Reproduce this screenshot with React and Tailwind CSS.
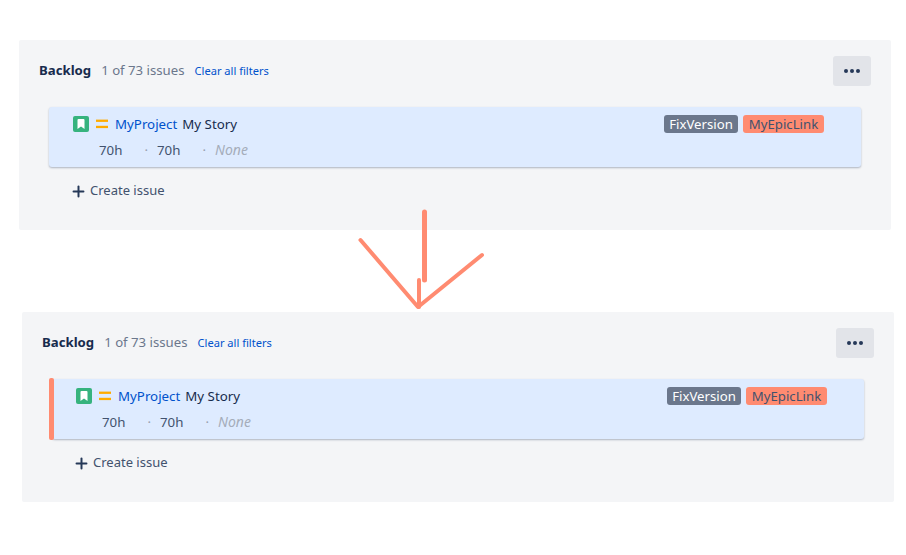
import React from "react";
import { Plus } from "lucide-react";

function Backlog({ className, marked }) {
  return (
    <div className={`w-[872px] h-[190px] bg-[#f4f5f7] rounded-[2px] flex flex-col ${className}`}>
      <div className="flex items-center h-[30px] mt-4 ml-5 mr-5">
        <span className="text-[13.2px] font-bold text-[#172b4d]">Backlog</span>
        <span className="ml-[10px] text-[13.2px] text-[#6b778c]">1 of 73 issues</span>
        <span className="ml-[10px] text-[11.1px] text-[#0052cc]">Clear all filters</span>
        <button className="ml-auto w-[38px] h-[30px] rounded-[3px] bg-[#e2e4e9] flex items-center justify-center gap-[2px]">
          <i className="w-1 h-1 rounded-full bg-[#253858]" />
          <i className="w-1 h-1 rounded-full bg-[#253858]" />
          <i className="w-1 h-1 rounded-full bg-[#253858]" />
        </button>
      </div>
      <div className="relative mt-[21px] ml-[30px] mr-[30px] h-[60px] rounded-[3px] bg-[#deebff] shadow-[0_1px_2px_rgba(9,30,66,0.3)]">
        {marked && <div className="absolute left-[-3px] top-[-1px] w-[5px] h-[62px] rounded-[2px] bg-[#ff8b71]" />}
        <div className="flex items-center h-[18px] mt-[8px] pl-6 pr-[37px]">
          <span className="w-4 h-4 rounded-[2px] bg-[#36b37e] flex items-center justify-center">
            <svg width="8" height="10" viewBox="0 0 8 10">
              <path d="M0.5 1a1 1 0 0 1 1-1h5a1 1 0 0 1 1 1v9L4 7.4 0.5 10z" fill="#fff" />
            </svg>
          </span>
          <svg className="ml-[7px]" width="12" height="10" viewBox="0 0 12 10">
            <rect x="0" y="0.6" width="12" height="2.3" fill="#ffab00" />
            <rect x="0" y="6.8" width="12" height="2.3" fill="#ffab00" />
          </svg>
          <span className="ml-[7px] text-[13.3px] leading-[18px] text-[#0052cc]">MyProject</span>
          <span className="ml-[5px] text-[13.3px] leading-[18px] text-[#172b4d]">My Story</span>
          <span className="ml-auto h-[18px] w-[74px] text-center rounded-[3px] bg-[#6b778c] text-white text-[13.2px] leading-[18px]">FixVersion</span>
          <span className="ml-[5px] h-[18px] w-[81px] text-center rounded-[3px] bg-[#ff8b71] text-[#42526e] text-[13.2px] leading-[18px]">MyEpicLink</span>
        </div>
        <div className="flex items-center h-[18px] mt-[8px] pl-[50px] text-[13.3px] leading-[18px] text-[#42526e]">
          <span>70h</span>
          <span className="ml-[22px] text-[#97a0af]">·</span>
          <span className="ml-[9px]">70h</span>
          <span className="ml-[22px] text-[#97a0af]">·</span>
          <span className="ml-[9px] text-[14px] italic text-[#a5adba]">None</span>
        </div>
      </div>
      <div className="flex items-center mt-[14px] ml-[51px] text-[13px] text-[#42526e]">
        <Plus size={17} strokeWidth={2.8} className="text-[#253858] translate-y-[1px]" />
        <span className="ml-[3px]">Create issue</span>
      </div>
    </div>
  );
}

export default function App() {
  return (
    <div className="relative w-[906px] h-[555px] bg-white overflow-hidden font-['Noto_Sans',sans-serif]">
      <Backlog className="ml-[19px] mt-10" />
      <Backlog className="ml-[22px] mt-[82px]" marked />
      {/* hand drawn arrow on top of the screenshot */}
      <svg className="absolute left-0 top-0" width="906" height="555" fill="none" stroke="#ff8b71" strokeWidth="4" strokeLinecap="round" strokeLinejoin="round">
        <path d="M424.500 212V280" strokeWidth="5" />
        <path d="M419 280V307" strokeWidth="4" />
        <path d="M360.500 240L418 307L482 255" />
      </svg>
    </div>
  );
}
